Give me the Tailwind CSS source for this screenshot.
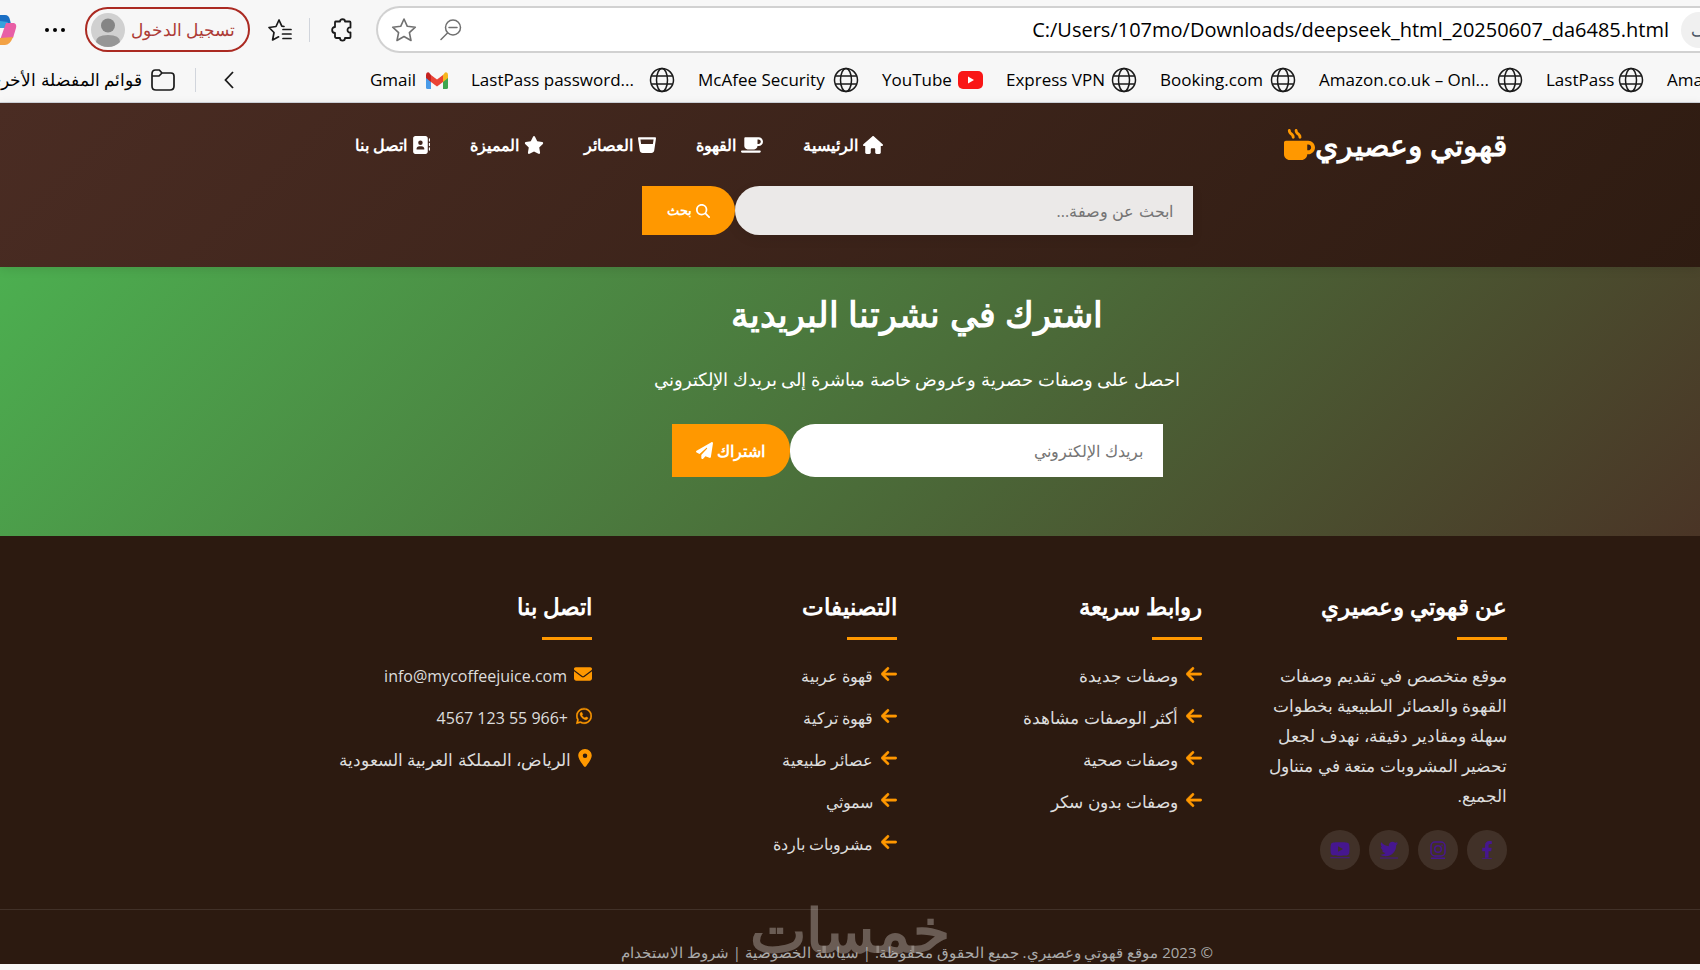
<!DOCTYPE html>
<html lang="ar" dir="rtl">
<head>
    <meta charset="UTF-8">
    <meta name="viewport" content="width=device-width, initial-scale=1.0">
    <title>قهوتي وعصيري</title>
    <script src="https://cdn.jsdelivr.net/npm/@tailwindcss/browser@4"></script>
</head>
<body class="bg-[#f7f7f7] font-['Open_Sans','Noto_Sans',sans-serif] overflow-x-hidden">
    <!-- icon sprite -->
    <svg class="hidden">
        <symbol id="globe" viewBox="0 0 26 26"><g fill="none" stroke="#1a1a1a" stroke-width="1.5"><circle cx="13" cy="13" r="11.5"/><ellipse cx="13" cy="13" rx="5.5" ry="11.5"/><path d="M2.5 9h21M2.5 17h21"/></g></symbol>
        <symbol id="house" viewBox="0 0 576 512"><path d="M575.8 255.5c0 18-15 32.1-32 32.1h-32l.7 160.2c0 2.7-.2 5.4-.5 8.1V472c0 22.1-17.9 40-40 40H456c-1.1 0-2.2 0-3.3-.1c-1.4 .1-2.8 .1-4.2 .1H416 392c-22.1 0-40-17.9-40-40V448 384c0-17.7-14.3-32-32-32H256c-17.7 0-32 14.3-32 32v64 24c0 22.1-17.9 40-40 40H160 128.1c-1.5 0-3-.1-4.5-.2c-1.2 .1-2.4 .2-3.6 .2H104c-22.1 0-40-17.9-40-40V360c0-.9 0-1.9 .1-2.8V287.6H32c-18 0-32-14-32-32.1c0-9 3-17 10-24L266.4 8c7-7 15-8 22-8s15 2 21 7L564.8 231.5c8 7 12 15 11 24z"/></symbol>
        <symbol id="coffee" viewBox="0 0 640 512"><path d="M96 64c0-17.7 14.3-32 32-32H448h64c70.7 0 128 57.3 128 128s-57.3 128-128 128H480c0 53-43 96-96 96H192c-53 0-96-43-96-96V64zM480 224h32c35.3 0 64-28.7 64-64s-28.7-64-64-64H480V224zM32 416H544c17.7 0 32 14.3 32 32s-14.3 32-32 32H32c-17.7 0-32-14.3-32-32s14.3-32 32-32z"/></symbol>
        <symbol id="glass" viewBox="0 0 512 512"><path d="M32 32c-9.3 0-18.1 4-24.2 11.1S-1 59.4 .3 68.6l50 342.9c5.7 39.3 39.4 68.5 79.2 68.5h253c39.7 0 73.4-29.1 79.2-68.5l50-342.9c1.3-9.2-1.4-18.5-7.5-25.5S489.3 32 480 32H32zM87.7 224L69 96H443L424.3 224H87.7z"/></symbol>
        <symbol id="star" viewBox="0 0 576 512"><path d="M316.9 18C311.6 7 300.4 0 288.1 0s-23.4 7-28.8 18L195 150.3 51.4 171.5c-12 1.8-22 10.2-25.7 21.7s-.7 24.2 7.9 32.7L137.8 329 113.2 474.7c-2 12 3 24.2 12.9 31.3s23 8 33.8 2.3l128.3-68.5 128.3 68.5c10.8 5.7 23.9 4.9 33.8-2.3s14.9-19.3 12.9-31.3L438.5 329 542.7 225.9c8.6-8.5 11.7-21.2 7.9-32.7s-13.7-19.9-25.7-21.7L381.2 150.3 316.9 18z"/></symbol>
        <symbol id="contacts" viewBox="0 0 512 512"><path d="M96 0C60.7 0 32 28.7 32 64V448c0 35.3 28.7 64 64 64H384c35.3 0 64-28.7 64-64V64c0-35.3-28.7-64-64-64H96zM208 288h64c44.2 0 80 35.8 80 80c0 8.8-7.2 16-16 16H144c-8.8 0-16-7.2-16-16c0-44.2 35.8-80 80-80zm-32-96a64 64 0 1 1 128 0 64 64 0 1 1-128 0zM512 80c0-8.8-7.2-16-16-16s-16 7.2-16 16v64c0 8.8 7.2 16 16 16s16-7.2 16-16V80zM496 192c-8.8 0-16 7.2-16 16v64c0 8.8 7.2 16 16 16s16-7.2 16-16V208c0-8.8-7.2-16-16-16zm16 144c0-8.8-7.2-16-16-16s-16 7.2-16 16v64c0 8.8 7.2 16 16 16s16-7.2 16-16V336z"/></symbol>
        <symbol id="search" viewBox="0 0 512 512"><path d="M416 208c0 45.9-14.9 88.3-40 122.7L502.6 457.4c12.5 12.5 12.5 32.8 0 45.3s-32.8 12.5-45.3 0L330.7 376c-34.4 25.2-76.8 40-122.7 40C93.1 416 0 322.9 0 208S93.1 0 208 0S416 93.1 416 208zM208 352a144 144 0 1 0 0-288 144 144 0 1 0 0 288z"/></symbol>
        <symbol id="mug" viewBox="0 0 512 512"><path d="M88 0C74.7 0 64 10.7 64 24c0 38.9 23.4 59.4 39.1 73.1l1.1 1C120.5 112.3 128 119.9 128 136c0 13.3 10.7 24 24 24s24-10.7 24-24c0-38.9-23.4-59.4-39.1-73.1l-1.1-1C119.5 47.7 112 40.1 112 24c0-13.3-10.7-24-24-24zM32 192c-17.7 0-32 14.3-32 32V416c0 53 43 96 96 96H288c53 0 96-43 96-96h16c61.9 0 112-50.1 112-112s-50.1-112-112-112H352 32zm352 64h16c26.5 0 48 21.5 48 48s-21.5 48-48 48H384V256zM224 24c0-13.3-10.7-24-24-24s-24 10.7-24 24c0 38.9 23.4 59.4 39.1 73.1l1.1 1C232.5 112.3 240 119.9 240 136c0 13.3 10.7 24 24 24s24-10.7 24-24c0-38.9-23.4-59.4-39.1-73.1l-1.1-1C231.5 47.7 224 40.1 224 24z"/></symbol>
        <symbol id="plane" viewBox="0 0 512 512"><path d="M498.1 5.6c10.1 7 15.4 19.1 13.5 31.2l-64 416c-1.5 9.7-7.4 18.2-16 23s-18.9 5.4-28 1.6L284 427.7l-68.5 74.1c-8.9 9.7-22.9 12.9-35.2 8.1S160 493.2 160 480V396.4c0-4 1.5-7.8 4.2-10.7L331.8 202.8c5.8-6.3 5.6-16-.4-22s-15.7-6.4-22-.7L106 360.8 17.7 316.6C7.1 311.3 .3 300.7 0 288.9s5.9-22.8 16.1-28.7l448-256c10.7-6.1 23.9-5.5 34 1.4z"/></symbol>
        <symbol id="arrow" viewBox="0 0 448 512"><path stroke="#ff9800" stroke-width="16" d="M9.4 233.4c-12.5 12.5-12.5 32.8 0 45.3l160 160c12.5 12.5 32.8 12.5 45.3 0s12.5-32.8 0-45.3L109.2 288 416 288c17.7 0 32-14.3 32-32s-14.3-32-32-32l-306.7 0L214.6 118.6c12.5-12.5 12.5-32.8 0-45.3s-32.8-12.5-45.3 0l-160 160z"/></symbol>
        <symbol id="envelope" viewBox="0 0 512 512"><path d="M48 64C21.5 64 0 85.5 0 112c0 15.1 7.1 29.3 19.2 38.4L236.8 313.6c11.4 8.5 27 8.5 38.4 0L492.8 150.4c12.1-9.1 19.2-23.3 19.2-38.4c0-26.5-21.5-48-48-48H48zM0 176V384c0 35.3 28.7 64 64 64H448c35.3 0 64-28.7 64-64V176L294.4 339.2c-22.8 17.1-54 17.1-76.8 0L0 176z"/></symbol>
        <symbol id="whatsapp" viewBox="0 0 448 512"><path stroke="#ff9800" stroke-width="12" d="M380.9 97.1C339 55.1 283.2 32 223.9 32c-122.4 0-222 99.6-222 222 0 39.1 10.2 77.3 29.6 111L0 480l117.7-30.9c32.4 17.7 68.9 27 106.1 27h.1c122.3 0 224.1-99.6 224.1-222 0-59.3-25.2-115-67.1-157zm-157 341.6c-33.2 0-65.7-8.9-94-25.7l-6.7-4-69.8 18.3L72 359.2l-4.4-7c-18.5-29.4-28.2-63.3-28.2-98.2 0-101.7 82.8-184.5 184.6-184.5 49.3 0 95.6 19.2 130.4 54.1 34.8 34.9 56.2 81.2 56.1 130.5 0 101.8-84.9 184.6-186.6 184.6zm101.2-138.2c-5.5-2.8-32.8-16.2-37.9-18-5.1-1.9-8.8-2.8-12.5 2.8-3.7 5.6-14.3 18-17.6 21.8-3.2 3.7-6.5 4.2-12 1.4-32.6-16.3-54-29.1-75.5-66-5.7-9.8 5.7-9.1 16.3-30.3 1.8-3.7.9-6.9-.5-9.7-1.4-2.8-12.5-30.1-17.1-41.2-4.5-10.8-9.1-9.3-12.5-9.5-3.2-.2-6.9-.2-10.6-.2-3.7 0-9.7 1.4-14.8 6.9-5.1 5.6-19.4 19-19.4 46.3 0 27.3 19.9 53.7 22.6 57.4 2.8 3.7 39.1 59.7 94.8 83.8 35.2 15.2 49 16.5 66.6 13.9 10.7-1.6 32.8-13.4 37.4-26.4 4.6-13 4.6-24.1 3.2-26.4-1.3-2.5-5-3.9-10.5-6.6z"/></symbol>
        <symbol id="pin" viewBox="0 0 384 512"><path d="M215.7 499.2C267 435 384 279.4 384 192C384 86 298 0 192 0S0 86 0 192c0 87.4 117 243 168.3 307.2c12.3 15.3 35.1 15.3 47.4 0zM192 128a64 64 0 1 1 0 128 64 64 0 1 1 0-128z"/></symbol>
    </svg>

    <!-- browser toolbar -->
    <div dir="ltr" class="h-[103px] overflow-hidden border-b border-gray-300 text-black">
        <div class="flex h-[58px] items-center pt-[1px]">
            <svg class="w-[17px] h-8 shrink-0" viewBox="0 0 17 32"><path fill="#1b6fc4" d="M0 1h5q4 0 5 5l1 4-11 2z"/><path fill="#36a3dd" d="M0 7l8 1-3 6H0z"/><path fill="#e85fa6" d="M6 9h8q3 1 2 5l-3 10-9 2H0z"/><path fill="#f3a245" d="M0 24l13-1q-3 8-8 8H0z"/></svg>
            <button class="ml-7 shrink-0" aria-label="Settings"><svg class="w-5 h-5" viewBox="0 0 20 20"><circle cx="2" cy="10" r="2"/><circle cx="10" cy="10" r="2"/><circle cx="18" cy="10" r="2"/></svg></button>
            <button dir="rtl" class="ml-5 flex h-[45px] w-[165px] shrink-0 items-center justify-between rounded-full border-2 border-[#ab2a22] pr-[13px] pl-[4px] text-[17px] text-[#ad3b35]">تسجيل الدخول
                <svg class="w-[34px] h-[34px] shrink-0" viewBox="0 0 34 34"><circle cx="17" cy="17" r="17" fill="#d0d0d0"/><circle cx="17" cy="12.500" r="7" fill="#858585"/><path fill="#969696" d="M5 29q0-7 12-7t12 7q-5 5-12 5T5 29z"/></svg>
            </button>
            <button class="ml-[17px] shrink-0" aria-label="Favorites"><svg class="w-[26px] h-6" viewBox="0 0 26 24" fill="none" stroke="#1a1a1a" stroke-width="1.700" stroke-linejoin="round" stroke-linecap="round"><path d="M17 8.500l-2.200-.3L12 2 9 8.500 2 9.500l5 5L5.600 22l6-3.200"/><path d="M16 11.500h8M15.500 16h8.500M16 20.500h8"/></svg></button>
            <div class="ml-4 h-6 w-px shrink-0 bg-gray-300"></div>
            <button class="ml-5 shrink-0" aria-label="Extensions"><svg class="w-6 h-6" viewBox="0 0 24 24" fill="none" stroke="#1a1a1a" stroke-width="1.800" stroke-linejoin="round"><path d="M5.500 3.500h4.500c0-3 5-3 5 0h4.500q1 0 1 1V9.500c-4-.8-4 5.800 0 5V19q0 1-1 1H15c0 3.500-5 3.500-5 0H6.500q-1.500 0-1.500-1.500V15c-3.800-.2-3.800-6 0-6V4.500q0-1 .5-1z"/></svg></button>
            <div class="ml-[22px] flex h-[47px] grow items-center rounded-l-full border-2 border-r-0 border-[#d1d1d1] bg-white pl-[13px]">
                <button aria-label="Add to favorites"><svg class="w-[26px] h-[26px]" viewBox="0 0 26 26" fill="none" stroke="#707070" stroke-width="1.600" stroke-linejoin="round"><path d="M13 2l3.300 7.300 8 .9-5.900 5.400 1.600 7.900-7-4-7 4 1.600-7.900L1.700 10.200l8-.9z"/></svg></button>
                <button class="ml-[23px]" aria-label="Zoom"><svg class="w-[22px] h-[22px]" viewBox="0 0 22 22" fill="none" stroke="#707070" stroke-width="1.500" stroke-linecap="round"><circle cx="13" cy="8.500" r="7.500"/><path d="M9 8.500h8M7.500 14L1 20.500"/></svg></button>
                <input aria-label="Address" class="min-w-0 grow bg-transparent text-right text-[20px] outline-none" value="C:/Users/107mo/Downloads/deepseek_html_20250607_da6485.html">
                <div class="ml-3 flex h-9 w-[19px] items-center justify-end overflow-hidden rounded-l-full bg-[#f0f0f0] text-[16px] text-gray-600"><span class="-mr-2">ف</span></div>
            </div>
        </div>
        <div class="flex h-[44px] items-center text-[17px] whitespace-nowrap">
            <a href="#" class="flex w-[175px] shrink-0 items-center justify-end gap-[9px]"><span dir="rtl">قوائم المفضلة الأخرى</span><svg class="w-6 h-[22px] shrink-0" viewBox="0 0 24 22" fill="none" stroke="#1a1a1a" stroke-width="1.700" stroke-linejoin="round"><path d="M1 5q0-4 3.500-4h3.800L11 4h9q3 0 3 3v10q0 4-4 4H5q-4 0-4-4zM1 7h7l3-3"/></svg></a>
            <div class="ml-5 h-6 w-px shrink-0 bg-gray-300"></div>
            <button class="ml-[28px] shrink-0" aria-label="More"><svg class="w-[10px] h-[18px]" viewBox="0 0 10 18" fill="none" stroke="#1a1a1a" stroke-width="1.800"><path d="M9 1L1.500 9 9 17"/></svg></button>
            <div class="ml-[136px] flex items-center gap-[23px]">
                <a href="#" class="flex w-[78px] shrink-0 items-center justify-between">Gmail<svg class="w-[22px] h-[17px]" viewBox="0 0 22 17"><path fill="#4a9be8" d="M0 3h5v14H1.500Q0 17 0 15.500z"/><path fill="#3fa650" d="M17 3h5v12.500q0 1.500-1.500 1.500H17z"/><path fill="#f6b61e" d="M17 3l2-2.500q3-.8 3 2.500v3l-5 4z"/><path fill="#c5221f" d="M0 3Q0-.3 3 .5L5 3v7L0 6z"/><path fill="#ea4335" d="M5 3l6 4.500L17 3v7l-6 4.500L5 10z"/></svg></a>
                <a href="#" class="flex w-[204px] shrink-0 items-center justify-between">LastPass password...<svg class="w-[26px] h-[26px]"><use href="#globe"/></svg></a>
                <a href="#" class="flex w-[161px] shrink-0 items-center justify-between">McAfee Security<svg class="w-[26px] h-[26px]"><use href="#globe"/></svg></a>
                <a href="#" class="flex w-[101px] shrink-0 items-center justify-between">YouTube<svg class="w-[25px] h-[18px]" viewBox="0 0 25 18"><rect width="25" height="18" rx="5" fill="#f91616"/><path fill="#fff" d="M10 5.500v7l6-3.500z"/></svg></a>
                <a href="#" class="flex w-[131px] shrink-0 items-center justify-between">Express VPN<svg class="w-[26px] h-[26px]"><use href="#globe"/></svg></a>
                <a href="#" class="flex w-[136px] shrink-0 items-center justify-between">Booking.com<svg class="w-[26px] h-[26px]"><use href="#globe"/></svg></a>
                <a href="#" class="flex w-[204px] shrink-0 items-center justify-between">Amazon.co.uk – Onl...<svg class="w-[26px] h-[26px]"><use href="#globe"/></svg></a>
                <a href="#" class="flex w-[98px] shrink-0 items-center justify-between">LastPass<svg class="w-[26px] h-[26px]"><use href="#globe"/></svg></a>
                <a href="#" class="shrink-0">Amazon</a>
            </div>
        </div>
    </div>

    <!-- site header -->
    <header class="relative z-10 h-[164px] bg-[linear-gradient(135deg,#4a2c23_0%,#2c1a10_107%)] ps-[193px] text-white shadow-[0_2px_10px_rgba(0,0,0,0.1)]">
        <div class="max-w-[1180px]">
            <div class="flex h-[83px] items-center justify-between">
                <a href="#" class="flex items-center text-[30px] font-bold">قهوتي وعصيري<svg class="w-[31px] h-[31px] fill-[#ff9800]"><use href="#mug"/></svg></a>
                <nav class="flex w-[556px] gap-10 text-[16px] font-bold">
                    <a href="#" class="flex items-center gap-[5px]"><svg class="w-5 h-[18px] fill-white"><use href="#house"/></svg>الرئيسية</a>
                    <a href="#" class="flex items-center gap-[5px]"><svg class="w-[22px] h-[18px] fill-white"><use href="#coffee"/></svg>القهوة</a>
                    <a href="#" class="flex items-center gap-[5px]"><svg class="w-[18px] h-[18px] fill-white"><use href="#glass"/></svg>العصائر</a>
                    <a href="#" class="flex items-center gap-[5px]"><svg class="w-5 h-[18px] fill-white"><use href="#star"/></svg>المميزة</a>
                    <a href="#" class="flex items-center gap-[5px]"><svg class="w-[18px] h-[18px] fill-white"><use href="#contacts"/></svg>اتصل بنا</a>
                </nav>
            </div>
            <form class="mx-auto flex h-[49px] w-[551px]">
                <input type="text" aria-label="بحث" placeholder="ابحث عن وصفة..." class="min-w-0 grow rounded-l-[25px] bg-[#ebe9e8] px-5 text-[16px] placeholder:text-[#757575] shadow-[0_4px_12px_rgba(0,0,0,0.08)]">
                <button type="button" class="flex w-[93px] items-center justify-center gap-1 rounded-r-[25px] bg-[#ff9800] text-[13px] font-bold"><svg class="w-[14px] h-[14px] fill-white"><use href="#search"/></svg>بحث</button>
            </form>
        </div>
    </header>

    <!-- newsletter -->
    <section class="h-[269px] bg-[linear-gradient(135deg,#4caf50_0%,#4a2c23_107%)] ps-[193px] pt-[19px] text-white">
        <div class="flex max-w-[1180px] flex-col items-center">
            <h2 class="text-[35px] leading-[56px] font-bold">اشترك في نشرتنا البريدية</h2>
            <p class="mt-[21px] text-[18px] leading-[32px]">احصل على وصفات حصرية وعروض خاصة مباشرة إلى بريدك الإلكتروني</p>
            <form class="mt-[29px] flex h-[53px] w-[491px]">
                <input type="email" aria-label="بريدك الإلكتروني" placeholder="بريدك الإلكتروني" class="min-w-0 grow rounded-l-[25px] bg-white px-5 text-right text-[16px] placeholder:text-[#757575]">
                <button type="button" class="flex w-[118px] items-center justify-center gap-1 rounded-r-[25px] bg-[#ff9800] text-[16px] font-bold">اشتراك<svg class="w-[17px] h-[17px] fill-white"><use href="#plane"/></svg></button>
            </form>
        </div>
    </section>

    <!-- footer -->
    <footer class="h-[428px] overflow-hidden bg-[#2c1a10] pt-[50px] text-[#dddddd]">
        <div class="ps-[193px]">
            <div class="grid h-[323px] max-w-[1180px] grid-cols-4 gap-10 text-[17px]">
                <div>
                    <h3 class="h-[51px] text-[23px] leading-[40px] font-bold text-white">عن قهوتي وعصيري</h3>
                    <div class="h-[3px] w-[50px] bg-[#ff9800]"></div>
                    <p class="mt-[21px] leading-[30px]">موقع متخصص في تقديم وصفات<br>القهوة والعصائر الطبيعية بخطوات<br>سهلة ومقادير دقيقة، نهدف لجعل<br>تحضير المشروبات متعة في متناول<br>الجميع.</p>
                    <div class="mt-[19px] flex gap-[9px]">
                        <a href="#" aria-label="Facebook" class="flex h-10 w-10 items-center justify-center rounded-full bg-white/10"><svg class="w-4 h-[18px]" viewBox="0 0 448 512" fill="#46178f"><path d="M343.100 288l14.200-92.700h-88.900v-60.100c0-25.400 12.400-50.100 52.200-50.100h40.400V6.300S324.400 0 289.400 0c-73.200 0-121.100 44.400-121.100 124.700v70.600H86.900V288h81.400v190h100.100V288z"/><path d="M90 490h270v22H90z"/></svg></a>
                        <a href="#" aria-label="Instagram" class="flex h-10 w-10 items-center justify-center rounded-full bg-white/10"><svg class="w-4 h-[18px]" viewBox="0 0 16 18" fill="none" stroke="#46178f" stroke-width="1.500"><rect x="1" y="1" width="14" height="14" rx="4"/><circle cx="8" cy="8" r="3.300"/><path d="M11.500 4.200h1M1 17.300h14"/></svg></a>
                        <a href="#" aria-label="Twitter" class="flex h-10 w-10 items-center justify-center rounded-full bg-white/10"><svg class="w-[18px] h-[18px]" viewBox="0 30 512 512" fill="#46178f"><path d="M459.370 151.716c.325 4.548.325 9.097.325 13.645 0 138.720-105.583 298.558-298.558 298.558-59.452 0-114.680-17.219-161.137-47.106 8.447.974 16.568 1.299 25.340 1.299 49.055 0 94.213-16.568 130.274-44.832-46.132-.975-84.792-31.188-98.112-72.772 6.498.974 12.995 1.624 19.818 1.624 9.421 0 18.843-1.300 27.614-3.573-48.081-9.747-84.143-51.980-84.143-102.985v-1.299c13.969 7.797 30.214 12.670 47.431 13.319-28.264-18.843-46.781-51.005-46.781-87.391 0-19.492 5.197-37.360 14.294-52.954 51.655 63.675 129.300 105.258 216.365 109.807-1.624-7.797-2.599-15.918-2.599-24.040 0-57.828 46.782-104.934 104.934-104.934 30.213 0 57.502 12.670 76.670 33.137 23.715-4.548 46.456-13.320 66.599-25.340-7.798 24.366-24.366 44.833-46.132 57.827 21.117-2.273 41.584-8.122 60.426-16.243-14.292 20.791-32.161 39.308-52.628 54.253z"/><path d="M0 500h512v28H0z"/></svg></a>
                        <a href="#" aria-label="YouTube" class="flex h-10 w-10 items-center justify-center rounded-full bg-white/10"><svg class="w-5 h-[18px]" viewBox="0 30 576 512" fill="#46178f"><path d="M549.655 124.083c-6.281-23.650-24.787-42.276-48.284-48.597C458.781 64 288 64 288 64S117.220 64 74.629 75.486c-23.497 6.322-42.003 24.947-48.284 48.597-11.412 42.867-11.412 132.305-11.412 132.305s0 89.438 11.412 132.305c6.281 23.650 24.787 41.500 48.284 47.821C117.220 448 288 448 288 448s170.780 0 213.371-11.486c23.497-6.321 42.003-24.171 48.284-47.821 11.412-42.867 11.412-132.305 11.412-132.305s0-89.438-11.412-132.305zm-317.510 213.508V175.185l142.739 81.205-142.739 81.201z"/><path d="M10 495h556v28H10z"/></svg></a>
                    </div>
                </div>
                <div>
                    <h3 class="h-[51px] text-[23px] leading-[40px] font-bold text-white">روابط سريعة</h3>
                    <div class="h-[3px] w-[50px] bg-[#ff9800]"></div>
                    <ul class="mt-[21px] flex flex-col gap-3 leading-[30px]">
                        <li><a href="#" class="flex gap-2"><svg class="mt-1 w-4 h-[18px] fill-[#ff9800]"><use href="#arrow"/></svg>وصفات جديدة</a></li>
                        <li><a href="#" class="flex gap-2"><svg class="mt-1 w-4 h-[18px] fill-[#ff9800]"><use href="#arrow"/></svg>أكثر الوصفات مشاهدة</a></li>
                        <li><a href="#" class="flex gap-2"><svg class="mt-1 w-4 h-[18px] fill-[#ff9800]"><use href="#arrow"/></svg>وصفات صحية</a></li>
                        <li><a href="#" class="flex gap-2"><svg class="mt-1 w-4 h-[18px] fill-[#ff9800]"><use href="#arrow"/></svg>وصفات بدون سكر</a></li>
                    </ul>
                </div>
                <div>
                    <h3 class="h-[51px] text-[23px] leading-[40px] font-bold text-white">التصنيفات</h3>
                    <div class="h-[3px] w-[50px] bg-[#ff9800]"></div>
                    <ul class="mt-[21px] flex flex-col gap-3 text-[16px] leading-[30px]">
                        <li><a href="#" class="flex gap-2"><svg class="mt-1 w-4 h-[18px] fill-[#ff9800]"><use href="#arrow"/></svg>قهوة عربية</a></li>
                        <li><a href="#" class="flex gap-2"><svg class="mt-1 w-4 h-[18px] fill-[#ff9800]"><use href="#arrow"/></svg>قهوة تركية</a></li>
                        <li><a href="#" class="flex gap-2"><svg class="mt-1 w-4 h-[18px] fill-[#ff9800]"><use href="#arrow"/></svg>عصائر طبيعية</a></li>
                        <li><a href="#" class="flex gap-2"><svg class="mt-1 w-4 h-[18px] fill-[#ff9800]"><use href="#arrow"/></svg>سموثي</a></li>
                        <li><a href="#" class="flex gap-2"><svg class="mt-1 w-4 h-[18px] fill-[#ff9800]"><use href="#arrow"/></svg>مشروبات باردة</a></li>
                    </ul>
                </div>
                <div>
                    <h3 class="h-[51px] text-[23px] leading-[40px] font-bold text-white">اتصل بنا</h3>
                    <div class="h-[3px] w-[50px] bg-[#ff9800]"></div>
                    <ul class="mt-[21px] flex flex-col gap-3 leading-[30px]">
                        <li class="flex gap-[7px] text-[16px] leading-[30px]"><svg class="mt-1 w-[18px] h-[18px] fill-[#ff9800]"><use href="#envelope"/></svg>info@mycoffeejuice.com</li>
                        <li class="flex gap-2 text-[16px] leading-[30px]"><svg class="mt-1 w-4 h-[18px] fill-[#ff9800]"><use href="#whatsapp"/></svg>+966 55 123 4567</li>
                        <li class="flex gap-[7px]"><svg class="mt-1 w-[14px] h-[18px] fill-[#ff9800]"><use href="#pin"/></svg>الرياض، المملكة العربية السعودية</li>
                    </ul>
                </div>
            </div>
        </div>
        <div class="relative h-[55px] border-t border-white/10 ps-[193px] pt-[29px]">
            <p class="max-w-[1180px] text-center text-[15px] leading-[26px] text-[#aaaaaa]">© 2023 موقع قهوتي وعصيري. جميع الحقوق محفوظة. | سياسة الخصوصية | شروط الاستخدام</p>
            <!-- watermark over the copyright line -->
            <div class="absolute top-0 left-[748px] w-[204px] text-center text-[60px] leading-[38px] font-bold text-[#c8c0bc]/40">خمسات</div>
        </div>
    </footer>
</body>
</html>
